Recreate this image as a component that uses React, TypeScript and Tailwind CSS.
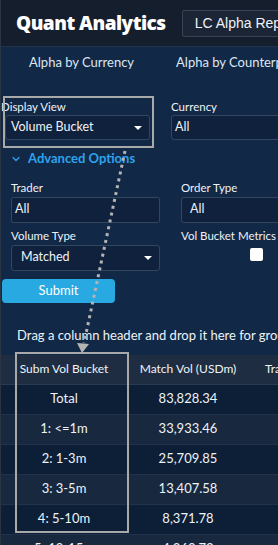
import { ChevronDown } from "lucide-react"

const rows = [
  { bucket: "Total", vol: "83,828.34" },
  { bucket: "1: <=1m", vol: "33,933.46" },
  { bucket: "2: 1-3m", vol: "25,709.85" },
  { bucket: "3: 3-5m", vol: "13,407.58" },
  { bucket: "4: 5-10m", vol: "8,371.78" },
  { bucket: "5: 10-15m", vol: "4,262.73" },
]

function Caret() {
  return <span className="absolute right-[7px] top-[10px] w-0 h-0 border-l-[4px] border-r-[4px] border-t-[4px] border-l-transparent border-r-transparent border-t-white" />
}

export default function App() {
  return (
    <div className="relative w-[278px] h-[545px] overflow-hidden bg-[#112847] text-[#eef3f8] text-[13px] flex" style={{ fontFamily: "Lato, 'Noto Sans', sans-serif" }}>
      <div className="w-[1px] shrink-0 bg-[#2b3443]" />
      <div className="flex-1 min-w-0 flex flex-col">
        {/* header */}
        <header className="h-[47px] shrink-0 bg-[#151e2d] border-b border-[#22324a] flex items-center pl-[15px] gap-[16px] whitespace-nowrap">
          <span className="text-[19px] font-extrabold text-white tracking-[-0.5px]" style={{ fontFamily: "'Open Sans', sans-serif" }}>Quant Analytics</span>
          <div className="h-[27px] shrink-0 px-[12px] flex items-center bg-[#1c2535] border border-[#384354] rounded-[2px] text-[14px]" style={{ fontFamily: "'Liberation Sans', Arial, sans-serif" }}>LC Alpha Report</div>
        </header>

        {/* tabs */}
        <nav className="h-[31px] shrink-0 flex items-center gap-[42px] pl-[28px] whitespace-nowrap text-[#dde7f1]">
          <span>Alpha by Currency</span>
          <span>Alpha by Counterparty</span>
        </nav>

        {/* form */}
        <div className="pt-[21px] flex gap-[21px] whitespace-nowrap">
          <div className="w-[149px] shrink-0">
            <div className="h-[16px] leading-[16px] text-[11.5px]">Display View</div>
            <div className="relative ml-[4px] h-[25px] w-[145px] bg-[#0f213d] border border-[#34465e] rounded-[3px] flex items-center pl-[5px] text-[12.5px]">
              Volume Bucket
              <Caret />
            </div>
          </div>
          <div className="flex-1">
            <div className="h-[16px] leading-[16px] text-[11.5px]">Currency</div>
            <div className="h-[25px] w-[140px] bg-[#0f213d] border border-[#34465e] rounded-[3px] flex items-center pl-[3px] text-[12.5px]">All</div>
          </div>
        </div>

        <div className="mt-[9px] h-[20px] flex items-center pl-[9px] gap-[6px] text-[#2fa2ec] font-bold">
          <ChevronDown className="w-[12px] h-[12px]" strokeWidth={2.5} />
          <span>Advanced Options</span>
        </div>

        <div className="mt-[11px] pl-[10px] grid grid-cols-[149px_1fr] gap-x-[21px] whitespace-nowrap text-[12.5px]">
          <div>
            <div className="h-[16px] leading-[16px] text-[11.5px]">Trader</div>
            <div className="mt-[1px] h-[26px] bg-[#0f213d] border border-[#34465e] rounded-[2px] flex items-center pl-[3px]">All</div>
          </div>
          <div>
            <div className="h-[16px] leading-[16px] text-[11.5px]">Order Type</div>
            <div className="mt-[1px] h-[26px] w-[120px] bg-[#0f213d] border border-[#34465e] rounded-[3px] flex items-center pl-[8px]">All</div>
          </div>
          <div className="mt-[5px]">
            <div className="h-[16px] leading-[16px] text-[11.5px]">Volume Type</div>
            <div className="relative mt-[1px] h-[26px] bg-[#0f213d] border border-[#34465e] rounded-[3px] flex items-center pl-[9px]">
              Matched
              <Caret />
            </div>
          </div>
          <div className="mt-[5px]">
            <div className="h-[16px] leading-[16px] text-[11.5px]">Vol Bucket Metrics</div>
            <div className="mt-[4px] ml-[69px] w-[13px] h-[13px] bg-white rounded-[2px]" />
          </div>
        </div>

        <button className="mt-[8px] ml-[1px] w-[113px] h-[24px] shrink-0 bg-[#29a9e1] rounded-[4px] text-white text-[13px]">Submit</button>

        <div className="mt-[24px] pl-[16px] whitespace-nowrap h-[16px] leading-[16px]">Drag a column header and drop it here for grouping</div>

        {/* grid */}
        <div className="mt-[12px] whitespace-nowrap text-[13px]">
          <div className="h-[30px] bg-[#1e2d41] grid grid-cols-[126px_122px_1fr] items-center text-[12px] border-b border-[#2a3a50]">
            <span className="text-center">Subm Vol Bucket</span>
            <span className="text-center">Match Vol (USDm)</span>
            <span className="pl-[16px] overflow-hidden">Trades</span>
          </div>
          {rows.map((r, i) => (
            <div key={r.bucket} className={`h-[30px] grid grid-cols-[126px_122px_1fr] items-center border-b border-[#22324a] ${i % 2 === 0 ? "bg-[#0d1e37]" : "bg-[#18283e]"}`}>
              <span className="text-center">{r.bucket}</span>
              <span className="text-center">{r.vol}</span>
              <span />
            </div>
          ))}
        </div>
      </div>

      {/* annotation overlays */}
      <div className="absolute left-[3px] top-[96px] w-[151px] h-[52px] border-2 border-[#a9a9a9] pointer-events-none" />
      <div className="absolute left-[15px] top-[352px] w-[114px] h-[181px] border-2 border-[#a9a9a9] pointer-events-none" />
      <svg className="absolute left-0 top-0 pointer-events-none" width="278" height="545">
        <line x1="125" y1="151" x2="84" y2="343" stroke="#b4b4b4" strokeWidth="3" strokeDasharray="3 4" />
        <polygon points="77,343 89,344 82,353" fill="#b4b4b4" />
      </svg>
    </div>
  )
}
